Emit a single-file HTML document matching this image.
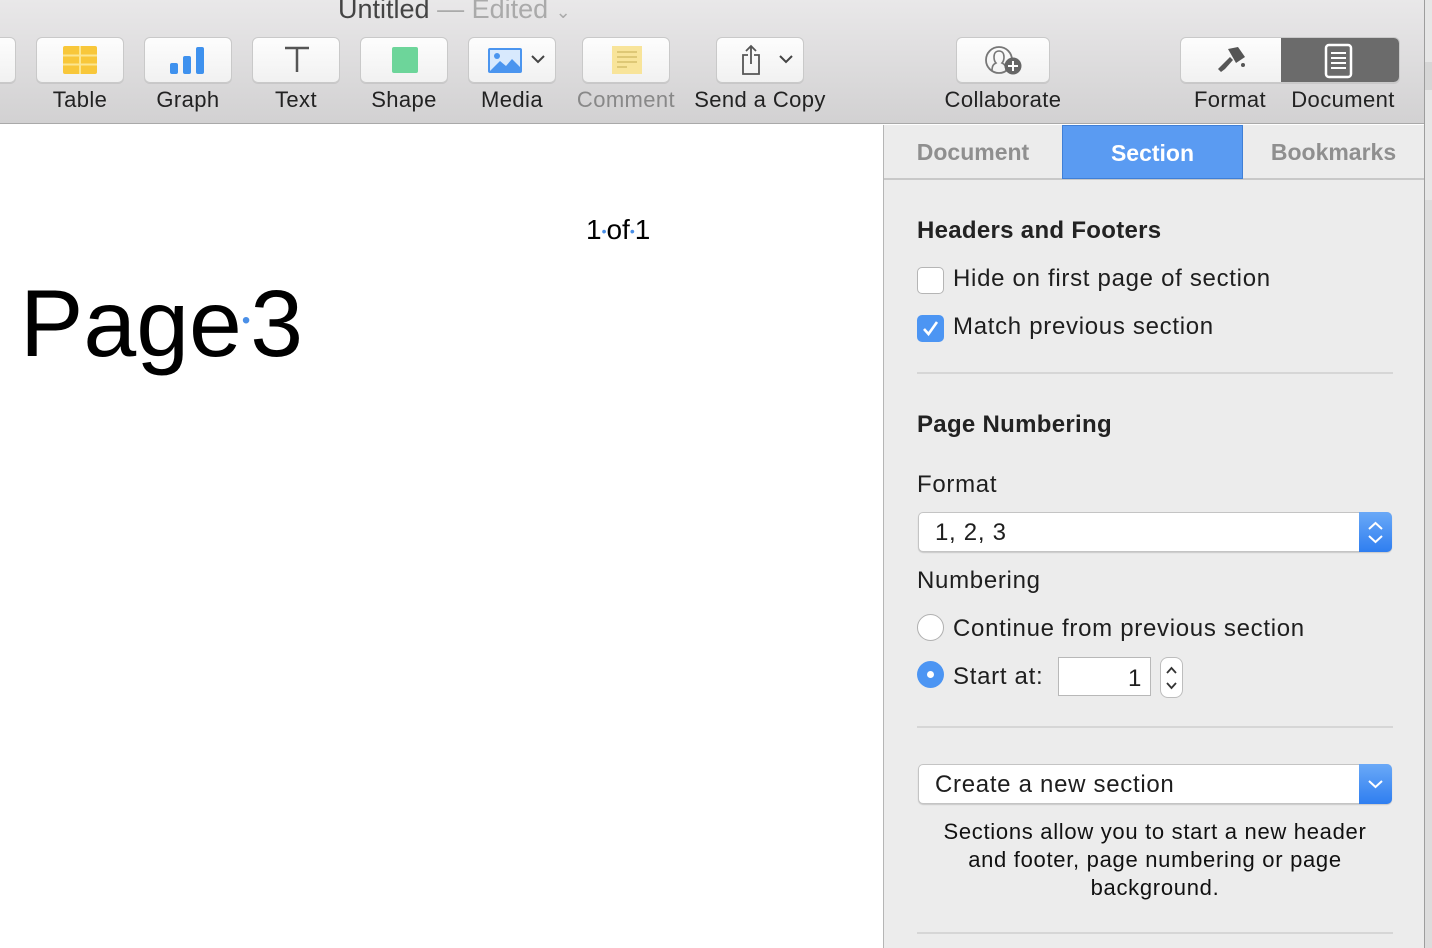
<!DOCTYPE html>
<html><head><meta charset="utf-8"><style>
*{margin:0;padding:0;box-sizing:border-box}
body{width:1432px;height:948px;overflow:hidden;background:#fff;font-family:"Liberation Sans",sans-serif;position:relative;color:#222}
.a{position:absolute}
#tb{left:0;top:0;width:1424px;height:124px;background:linear-gradient(#e9e8e9,#d2d1d2);border-bottom:1px solid #a9a9a9}
.btn{position:absolute;top:37px;height:46px;background:linear-gradient(#fdfdfd,#f1f1f1);border:1px solid #c9c9c9;border-radius:6px;box-shadow:0 1px 0 rgba(0,0,0,.08)}
.lbl{position:absolute;top:87px;font-size:22px;letter-spacing:.4px;color:#222;text-align:center;white-space:nowrap}
#sb{left:883px;top:125px;width:541px;height:823px;background:#ececec;border-left:1px solid #b5b5b5}
.tab{position:absolute;top:0;height:54px;font-size:23px;font-weight:bold;color:#8f8f8f;text-align:center;line-height:54px}
.t{position:absolute;font-size:24px;letter-spacing:.7px;color:#1e1e1e;white-space:nowrap}
.h{font-weight:bold;color:#222;letter-spacing:.3px}
.hr{position:absolute;left:33px;width:476px;height:2px;background:#d6d6d6}
.pop{position:absolute;left:34px;width:474px;height:40px;background:#fff;border:1px solid #c4c4c4;border-radius:5px;box-shadow:0 1px 1px rgba(0,0,0,.15)}
.pop .arr{position:absolute;right:-1px;top:-1px;width:33px;height:40px;background:linear-gradient(#6aa9f7,#2f7ef0);border-radius:0 5px 5px 0}
</style></head><body>
<div id="tb" class="a">
 <div class="a" style="left:338px;top:-6px;font-size:27px;color:#444">Untitled <span style="color:#aaa">— Edited</span> <span style="color:#aaa;font-size:18px">⌄</span></div>
 <div class="btn" style="left:-10px;width:26px"></div>
 <div class="btn" style="left:36px;width:88px"><svg class="a" style="left:26px;top:8px" width="34" height="28"><rect x="0" y="0" width="34" height="28" rx="2" fill="#f8c73a"/><path d="M0 9.5H34M0 18.5H34M17 0V28" stroke="#fbe691" stroke-width="2"/></svg></div>
 <div class="lbl" style="left:26px;width:108px">Table</div>
 <div class="btn" style="left:144px;width:88px"><svg class="a" style="left:25px;top:8px" width="38" height="28"><rect x="0" y="17" width="8" height="11" rx="2" fill="#3e91ee"/><rect x="13" y="10" width="8" height="18" rx="2" fill="#3e91ee"/><rect x="26" y="1" width="8" height="27" rx="2" fill="#3e91ee"/></svg></div>
 <div class="lbl" style="left:134px;width:108px">Graph</div>
 <div class="btn" style="left:252px;width:88px"><svg class="a" style="left:30px;top:8px" width="28" height="28"><path d="M2 2H26M14 2V26" stroke="#555" stroke-width="2.5" fill="none"/></svg></div>
 <div class="lbl" style="left:242px;width:108px">Text</div>
 <div class="btn" style="left:360px;width:88px"><div class="a" style="left:31px;top:9px;width:26px;height:26px;background:#6dd59a;border-radius:2px"></div></div>
 <div class="lbl" style="left:350px;width:108px">Shape</div>
 <div class="btn" style="left:468px;width:88px"><svg class="a" style="left:19px;top:10px" width="34" height="26"><rect width="34" height="25" rx="2" fill="#4b95ef"/><rect x="2" y="2" width="30" height="21" fill="#d8e9fd"/><circle cx="9" cy="8" r="3" fill="#4b95ef"/><path d="M2 23L12 13L18 18L24 11L32 19V23Z" fill="#4b95ef"/></svg><svg class="a" style="left:62px;top:16px" width="14" height="10"><path d="M1 2L7 8L13 2" stroke="#444" stroke-width="2" fill="none"/></svg></div>
 <div class="lbl" style="left:458px;width:108px">Media</div>
 <div class="btn" style="left:582px;width:88px"><svg class="a" style="left:29px;top:8px" width="30" height="28"><rect width="30" height="28" fill="#f8e49a"/><path d="M5 6H25M5 11H25M5 16H25M5 21H15" stroke="#d6be6a" stroke-width="1.5"/></svg></div>
 <div class="lbl" style="left:566px;width:120px;color:#888">Comment</div>
 <div class="btn" style="left:716px;width:88px"><svg class="a" style="left:22px;top:6px" width="28" height="32"><path d="M9 11H4V30H20V11H15M12 20V2M7 7L12 2L17 7" stroke="#555" stroke-width="1.8" fill="none"/></svg><svg class="a" style="left:62px;top:16px" width="14" height="10"><path d="M1 2L7 8L13 2" stroke="#444" stroke-width="2" fill="none"/></svg></div>
 <div class="lbl" style="left:680px;width:160px">Send a Copy</div>
 <div class="btn" style="left:956px;width:94px"><svg class="a" style="left:26px;top:7px" width="44" height="32"><circle cx="16" cy="15" r="13" stroke="#777" stroke-width="1.8" fill="none"/><path d="M9 26C9 20 11 19 13 18C11 16 11 14 11 12C11 8 13 6 16 6C19 6 21 8 21 12C21 14 21 16 19 18C21 19 23 20 23 26" stroke="#777" stroke-width="1.6" fill="none"/><circle cx="30" cy="21" r="8.5" fill="#666"/><path d="M30 16V26M25 21H35" stroke="#fff" stroke-width="2"/></svg></div>
 <div class="lbl" style="left:923px;width:160px">Collaborate</div>
 <div class="btn" style="left:1180px;width:220px;overflow:hidden"><div class="a" style="left:100px;top:-1px;width:120px;height:46px;background:#6b6b6b"></div>
  <svg class="a" style="left:33px;top:7px" width="34" height="32"><path d="M14 4L24 2L31 12L22 18Z" fill="#555"/><path d="M16 12L7 21L4 24L7 27L11 24L19 15Z" fill="#555"/><circle cx="29" cy="20" r="2" fill="#555"/></svg>
  <svg class="a" style="left:143px;top:5px" width="30" height="36"><rect x="2" y="2" width="25" height="32" rx="3" stroke="#fff" stroke-width="2.5" fill="none"/><path d="M7 10H22M7 15H22M7 20H22M7 25H22" stroke="#fff" stroke-width="2"/></svg></div>
 <div class="lbl" style="left:1180px;width:100px">Format</div>
 <div class="lbl" style="left:1276px;width:134px">Document</div>
</div>
<div class="a" style="left:1424px;top:0;width:8px;height:948px;background:#e6e6e6;border-left:1px solid #9d9d9d"></div>
<div class="a" style="left:1425px;top:62px;width:7px;height:28px;background:#d6d6d6"></div>
<div class="a" style="left:1425px;top:200px;width:7px;height:748px;background:#dcdcdc"></div>

<div class="a" style="left:586px;top:214px;font-size:28px;color:#000">1<span style="color:#4a8fe7;font-size:14px;vertical-align:3px">•</span>of<span style="color:#4a8fe7;font-size:14px;vertical-align:3px">•</span>1</div>
<div class="a" style="left:20px;top:270px;font-size:95px;color:#000">Page<span style="color:#4a8fe7;font-size:24px;vertical-align:28px">•</span>3</div>

<div id="sb" class="a">
 <div class="a" style="left:0;top:0;width:540px;height:55px;background:#ececec;border-bottom:2px solid #c8c8c8"></div>
 <div class="tab" style="left:0;width:178px">Document</div>
 <div class="tab" style="left:178px;width:181px;background:#5a9bf2;border:1px solid #3f7fd6;color:#fff">Section</div>
 <div class="tab" style="left:359px;width:181px">Bookmarks</div>
 <div class="t h" style="left:33px;top:92px">Headers and Footers</div>
 <div class="a" style="left:33px;top:142px;width:27px;height:27px;background:#fff;border:1px solid #b5b5b5;border-radius:5px"></div>
 <div class="t" style="left:69px;top:140px">Hide on first page of section</div>
 <div class="a" style="left:33px;top:190px;width:27px;height:27px;background:#4c95f3;border-radius:5px"><svg width="27" height="27"><path d="M7 14L11.5 19L20 7" stroke="#fff" stroke-width="2.6" fill="none"/></svg></div>
 <div class="t" style="left:69px;top:188px">Match previous section</div>
 <div class="hr" style="top:247px"></div>
 <div class="t h" style="left:33px;top:286px">Page Numbering</div>
 <div class="t" style="left:33px;top:346px">Format</div>
 <div class="pop" style="top:387px"><div class="t" style="left:16px;top:6px">1, 2, 3</div><div class="arr"><svg width="33" height="40"><path d="M10 17L16.5 11L23 17M10 24L16.5 30L23 24" stroke="#fff" stroke-width="2" fill="none"/></svg></div></div>
 <div class="t" style="left:33px;top:442px">Numbering</div>
 <div class="a" style="left:33px;top:489px;width:27px;height:27px;border-radius:50%;background:#fff;border:1px solid #b0b0b0"></div>
 <div class="t" style="left:69px;top:490px">Continue from previous section</div>
 <div class="a" style="left:33px;top:536px;width:27px;height:27px;border-radius:50%;background:#4c95f3"><div class="a" style="left:10px;top:10px;width:7px;height:7px;border-radius:50%;background:#fff"></div></div>
 <div class="t" style="left:69px;top:538px">Start at:</div>
 <div class="a" style="left:174px;top:532px;width:93px;height:39px;background:#fff;border:1px solid #b8b8b8"><div class="t" style="right:8px;top:7px">1</div></div>
 <div class="a" style="left:276px;top:532px;width:23px;height:41px;background:#fff;border:1px solid #bdbdbd;border-radius:8px"><svg width="21" height="39"><path d="M6 15L10.5 10L15 15M6 25L10.5 30L15 25" stroke="#333" stroke-width="1.8" fill="none"/></svg></div>
 <div class="hr" style="top:601px"></div>
 <div class="pop" style="top:639px"><div class="t" style="left:16px;top:6px">Create a new section</div><div class="arr"><svg width="33" height="40"><path d="M10 17L16.5 23L23 17" stroke="#fff" stroke-width="2" fill="none"/></svg></div></div>
 <div class="a" style="left:13px;top:693px;width:516px;text-align:center;font-size:22px;letter-spacing:.7px;line-height:28px;color:#111">Sections allow you to start a new header<br>and footer, page numbering or page<br>background.</div>
 <div class="hr" style="top:807px"></div>
</div>
</body></html>
